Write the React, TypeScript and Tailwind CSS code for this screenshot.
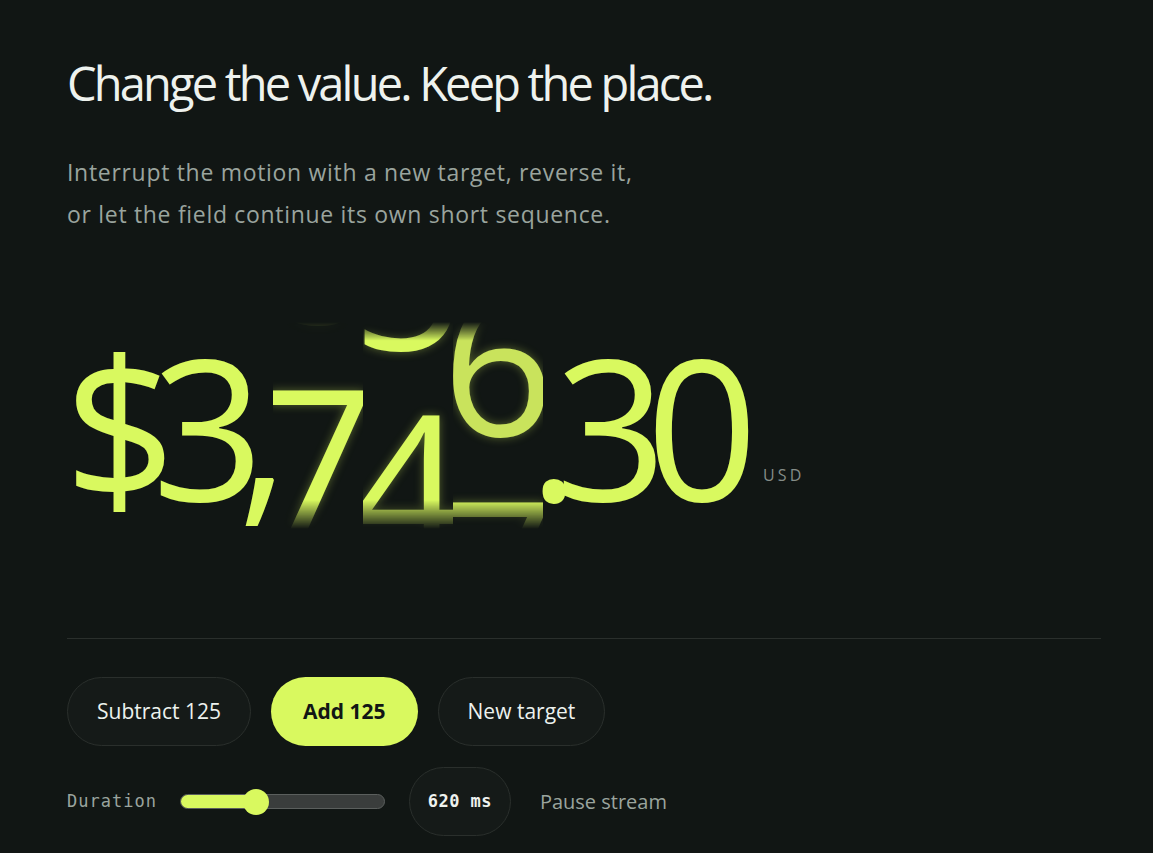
import React from "react";

type Column = {
  chars: string[];
  width: number;
  shift?: number;
  faded?: number[];
  rolling?: boolean;
};

// snapshot of the odometer mid-roll
const columns: Column[] = [
  { chars: ["$"], width: 86 },
  { chars: ["3"], width: 90 },
  { chars: [","], width: 20 },
  { chars: ["8", "7"], width: 90, shift: -177, faded: [0], rolling: true },
  { chars: ["5", "4"], width: 90, shift: -151, rolling: true },
  { chars: ["6", "7"], width: 90, shift: -65, rolling: true },
  { chars: ["."], width: 22 },
  { chars: ["3"], width: 92 },
  { chars: ["0"], width: 90 },
];

function DigitColumn({ col }: { col: Column }) {
  return (
    <div
      className={`h-[207px] shrink-0 ${
        col.rolling
          ? "overflow-hidden [mask-image:linear-gradient(to_bottom,transparent_0%,black_9%,black_86%,transparent_100%)]"
          : ""
      }`}
      style={{ width: col.width }}
    >
      <div style={{ transform: `translateY(${col.shift ?? 0}px)` }}>
        {col.chars.map((c, i) => (
          <span
            key={i}
            className={`flex h-[207px] justify-center leading-[207px] ${
              col.rolling ? "[text-shadow:0_0_10px_rgba(217,249,95,0.35)]" : ""
            } ${col.faded?.includes(i) ? "opacity-40" : ""} ${
              col.rolling && c === "6" ? "text-[#c9e35c]" : ""
            }`}
          >
            {c}
          </span>
        ))}
      </div>
    </div>
  );
}

function PillButton({ label, primary }: { label: string; primary?: boolean }) {
  return (
    <button
      className={`h-[69px] rounded-full text-[21px] ${
        primary
          ? "bg-[#d9f95f] px-[32px] font-bold text-[#121614]"
          : "border border-[#2a2f2c] bg-[#151a18] px-[29px] text-[#edf2ee]"
      }`}
    >
      {label}
    </button>
  );
}

export default function App() {
  return (
    <div className="min-h-[853px] w-full bg-[#111614] font-['Open_Sans',sans-serif]">
      <div className="w-[1100px] pl-[67px] pt-[56px]">
        <h1 className="text-[47px] font-normal leading-[55px] tracking-[-0.06em] text-[#eef2ee]">
          Change the value. Keep the place.
        </h1>
        <p className="mt-[40px] max-w-[585px] text-[23px] leading-[42px] tracking-[0.03em] text-[#9aa49e]">
          Interrupt the motion with a new target, reverse it, or let the field continue its own
          short sequence.
        </p>

        {/* odometer */}
        <div className="mt-[87px] flex items-end">
          <div className="ml-[10px] flex text-[196px] text-[#d9f95f]">
            {columns.map((c, i) => (
              <DigitColumn key={i} col={c} />
            ))}
          </div>
          <span className="mb-[44px] ml-[16px] text-[16px] leading-[20px] tracking-[0.2em] text-[#858d88]">
            USD
          </span>
        </div>

        <div className="mt-[109px] h-px w-[1034px] bg-[#2a2f2c]" />

        <div className="mt-[38px] flex gap-[20px]">
          <PillButton label="Subtract 125" />
          <PillButton label="Add 125" primary />
          <PillButton label="New target" />
        </div>

        <div className="mt-[21px] flex items-center">
          <span className="font-['DejaVu_Sans_Mono',monospace] text-[17px] tracking-[1px] text-[#9aa49e]">
            Duration
          </span>
          <div className="relative ml-[23px] h-[15px] w-[205px] rounded-full border border-[#5b5f5d] bg-[#3a3d3c]">
            <div className="h-full w-[76px] rounded-full bg-[#d9f95f]" />
            <div className="absolute left-[62px] top-1/2 h-[26px] w-[26px] -translate-y-1/2 rounded-full bg-[#d9f95f]" />
          </div>
          <div className="ml-[24px] flex h-[69px] w-[102px] items-center justify-center rounded-full border border-[#2a2f2c] bg-[#151a18] font-['DejaVu_Sans_Mono',monospace] text-[17px] font-bold tracking-[0.5px] text-[#eef2ee]">
            620 ms
          </div>
          <button className="ml-[29px] text-[20px] text-[#9aa49e]">Pause stream</button>
        </div>
      </div>
    </div>
  );
}
